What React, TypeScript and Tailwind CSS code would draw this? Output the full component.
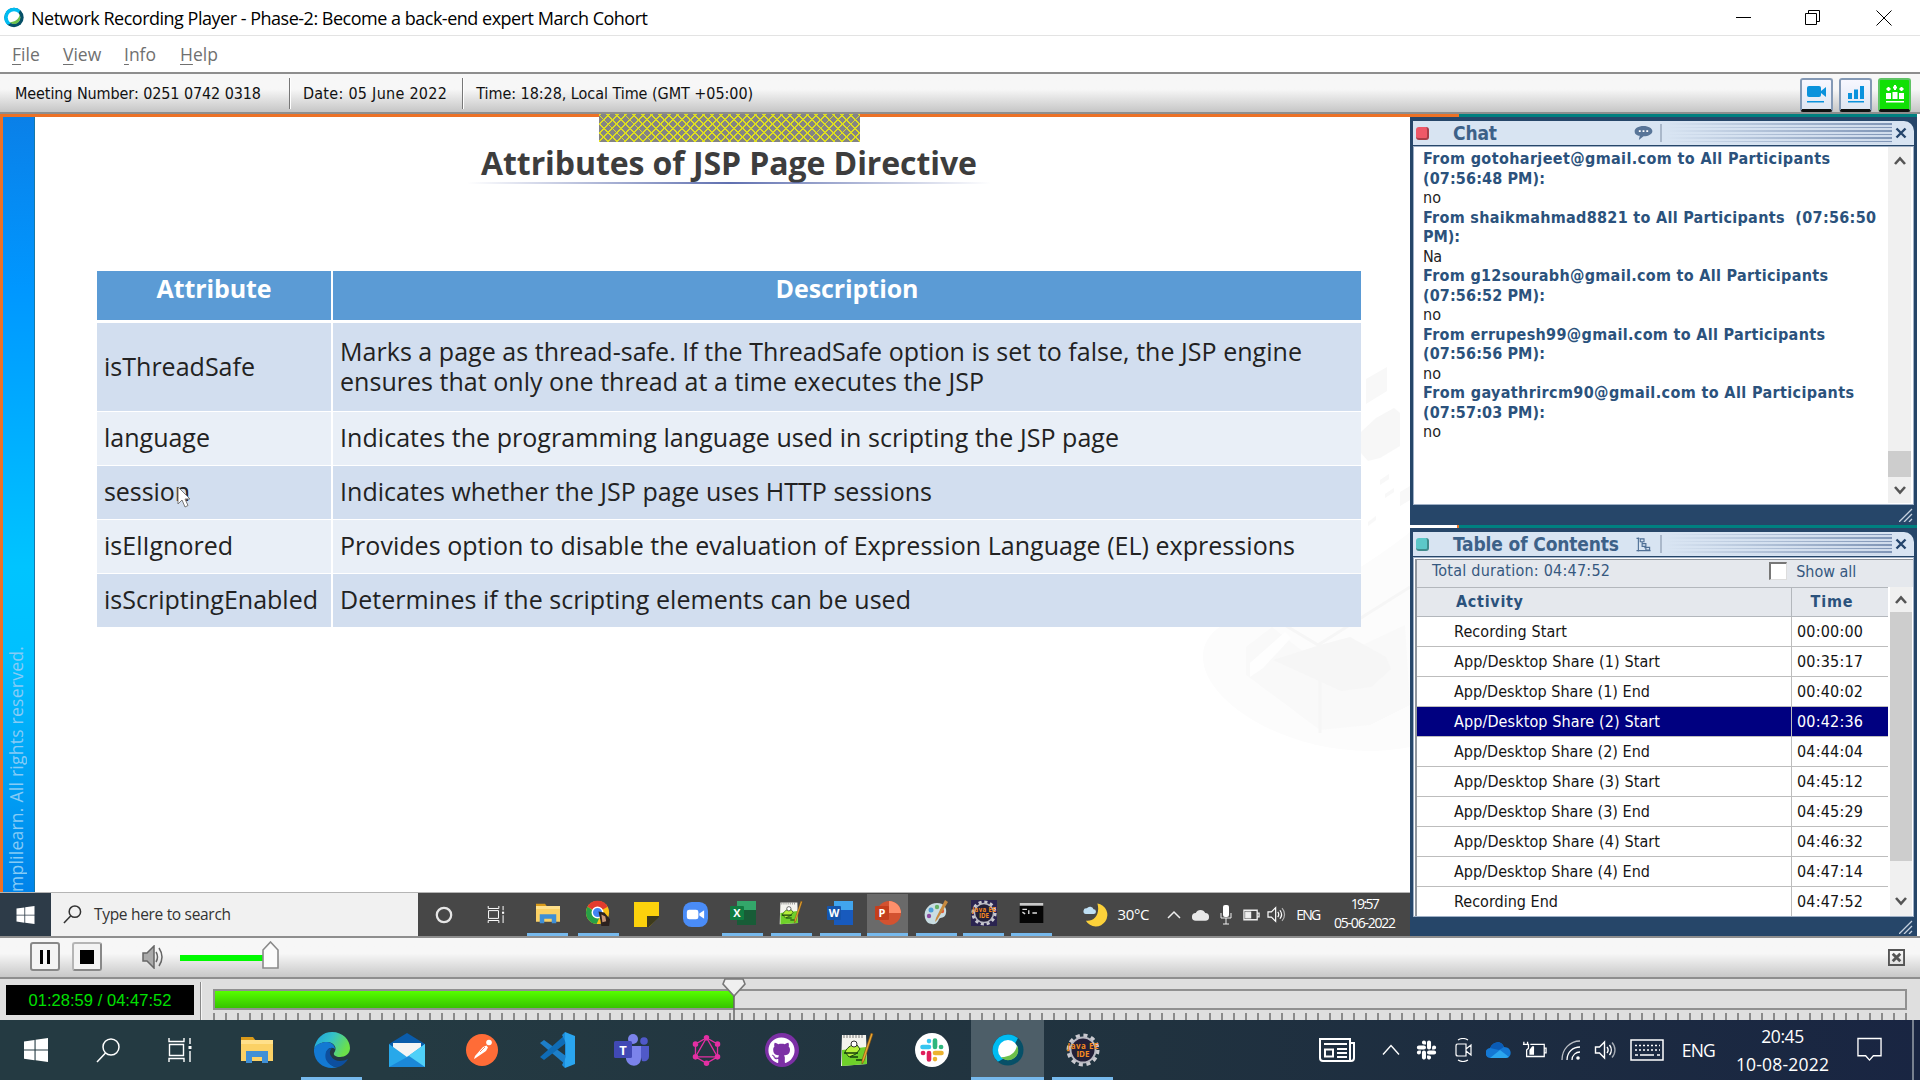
import React, { useLayoutEffect, useRef, useState } from "react";
import { FaGithub, FaSlack } from "react-icons/fa";
import { SiGraphql } from "react-icons/si";

/* Single line of text whose tracking is adjusted so that it spans exactly `w` pixels. */
function Fit({ w, children, className = "" }: { w: number; children: string; className?: string }) {
  const ref = useRef<HTMLSpanElement>(null);
  const [ls, setLs] = useState(0);
  useLayoutEffect(() => {
    const el = ref.current;
    if (!el) return;
    const natural = el.getBoundingClientRect().width;
    setLs((w - natural) / Math.max(1, children.length - 1));
  }, []);
  return (
    <span ref={ref} className={"inline-block shrink-0 whitespace-pre " + className} style={{ letterSpacing: ls + "px" }}>
      {children}
    </span>
  );
}

const segoe = "font-['Open_Sans','Noto_Sans',sans-serif]";
const tahoma = "font-['DejaVu_Sans_Condensed','DejaVu_Sans',sans-serif] [font-stretch:condensed]";

function WebexLogo({ className = "" }: { className?: string }) {
  return (
    <svg viewBox="0 0 32 32" className={className}>
      <ellipse cx="16" cy="16" rx="15.500" ry="15.500" fill="#075068" />
      <path d="M16 .5A15.500 15.500 0 0 0 6 27.800L16 22l10-17.700A15 15 0 0 0 16 .5z" fill="#00bcf2" />
      <path d="M26 4.300A15.500 15.500 0 0 1 6 27.800L20 24z" fill="#075068" />
      <circle cx="16" cy="16" r="10" fill="#fff" />
      <path d="M25 11.500A10 10 0 0 1 9 23.200C18 23 23.500 19 25 11.500z" fill="#6cc04a" />
    </svg>
  );
}

function WindowsLogo({ className = "" }: { className?: string }) {
  return (
    <svg viewBox="0 0 24 24" className={className} fill="#fff">
      <path d="M0 3.400 10.500 2v9.600H0zM11.600 1.800 24 0v11.600H11.600zM0 12.600h10.500v9.600L0 20.700zM11.600 12.600H24V24l-12.400-1.700z" />
    </svg>
  );
}

function TitleBar() {
  return (
    <div className={"flex h-9 items-center border-b border-[#e3e3e3] bg-white text-black " + segoe}>
      <WebexLogo className="ml-1 h-[21px] w-5" />
      <Fit w={617} className="ml-[7px] pt-px text-[18px]">Network Recording Player - Phase-2: Become a back-end expert March Cohort</Fit>
      <div className="ml-auto flex items-center pr-[28px]">
        <svg className="mr-[53px] h-4 w-4" viewBox="0 0 16 16" stroke="#000"><path d="M0 7.500h15" /></svg>
        <svg className="mr-[55px] h-4 w-4" viewBox="0 0 16 16" fill="none" stroke="#000"><path d="M.5 3.500h11v11H.5zM3.500 3V.5h11v11h-3" /></svg>
        <svg className="h-4 w-4" viewBox="0 0 16 16" stroke="#000"><path d="M.5.5l15 15M15.500.5l-15 15" /></svg>
      </div>
    </div>
  );
}

function MenuBar() {
  const items: [string, string, string][] = [
    ["F", "ile", "w-[51px]"],
    ["V", "iew", "w-[61px]"],
    ["I", "nfo", "w-[56px]"],
    ["H", "elp", "w-[60px]"],
  ];
  return (
    <div className={"flex h-9 items-center bg-white pl-3 text-[17.500px] text-[#707070] " + segoe}>
      {items.map(([a, b, w]) => (
        <span key={a} className={w}>
          <span className="underline underline-offset-[3px]">{a}</span>{b}
        </span>
      ))}
    </div>
  );
}

function InfoBar() {
  const button = "flex h-[34px] w-[33px] items-center justify-center rounded-[3px] border-2 border-b-[3px] border-b-[#111] ";
  const plain = button + "border-[#8499b5] bg-linear-to-b from-[#f7f7ff] to-[#dfe6f2]";
  return (
    <div className={"flex h-[42px] items-center border-y-2 border-[#8e8e8e] bg-linear-to-b from-[#f7f7f7] from-40% to-[#c6c6c6] text-[16px] text-[#111] " + tahoma}>
      <Fit w={246} className="ml-[15px] pt-[2px]">Meeting Number: 0251 0742 0318</Fit>
      <div className="ml-[28px] mt-px h-[31px] w-[2px] border-l border-[#777] bg-white" />
      <Fit w={144} className="ml-[12px] pt-[2px]">Date: 05 June 2022</Fit>
      <div className="ml-[15px] mt-px h-[31px] w-[2px] border-l border-[#777] bg-white" />
      <Fit w={277} className="ml-[12px] pt-[2px]">Time: 18:28, Local Time (GMT +05:00)</Fit>
      <div className="ml-auto mt-[3px] flex gap-[6px] pr-[9px]">
        <div className={plain}>
          <svg viewBox="0 0 22 20" className="h-5 w-[22px]" fill="#0a92dc"><rect x="1" y="2" width="14" height="11" rx="2" /><path d="M15 7l5-4v10l-5-4zM1 17h17v1.500H1z" /></svg>
        </div>
        <div className={plain}>
          <svg viewBox="0 0 22 20" className="h-5 w-[22px]" fill="#0a92dc"><path d="M3 9h4v6H3zM9 5.500h4V15H9zM15 2h4v13h-4zM3 17h16v1.500H3z" /></svg>
        </div>
        <div className={button + "border-[#5fc465] bg-[#10e005]"}>
          <svg viewBox="0 0 22 20" className="h-5 w-[22px]" fill="#fff"><path d="M2 9h5v6H2zM8.500 8h5v7h-5zM15 9h5v6h-5zM2 17h18v1.500H2zM3.500 3h2v4h-2zM2.500 4h4v2h-4zM10 1h2v5h-2zM9 2.500h4v2H9zM16.500 3h2v4h-2zM15.500 4h4v2h-4z" /></svg>
        </div>
      </div>
    </div>
  );
}

const attributes: [string, number, [string, number][]][] = [
  ["isThreadSafe", 151, [["Marks a page as thread-safe. If the ThreadSafe option is set to false, the JSP engine", 962], ["ensures that only one thread at a time executes the JSP", 644]]],
  ["language", 106, [["Indicates the programming language used in scripting the JSP page", 779]]],
  ["session", 86, [["Indicates whether the JSP page uses HTTP sessions", 592]]],
  ["isElIgnored", 129, [["Provides option to disable the evaluation of Expression Language (EL) expressions", 955]]],
  ["isScriptingEnabled", 214, [["Determines if the scripting elements can be used", 571]]],
];

function Slide() {
  return (
    <div className={"relative flex h-[778px] border-l-[3px] border-t-[3px] border-[#ec7126] bg-white " + segoe}>
      <svg className="absolute left-[1195px] top-[240px] h-[420px] w-[212px]" viewBox="0 0 212 420" fill="none">
        <path d="M5 300C5 270 40 255 90 250C150 220 180 200 212 175V390C110 410 5 350 5 300z" fill="#fcfcfc" />
        <path d="M168 22l21-12v24l-21 13z" fill="#f8f8f8" />
        <path d="M163 75l15-14 18-10 6 5v33l-20 12-12 3-7-8z" fill="#f7f7f7" />
        <path d="M182 123l9-6v5l-9 6zM187 137l9-6v4l-9 6zM170 165l8-6v4l-8 6zM202 135l10-6v14l-10 6z" fill="#f8f8f8" />
        <path d="M48 318V290l26-20 48 38 85-40 5 80-40 20-50 5z" fill="#f9f9f9" />
        <path d="M75 303l47-15 30-8 36 20 5 12-20 18-30 4z" fill="#f6f6f6" />
        <path d="M70 258l50 30 92-58M122 292v84" stroke="#f6f6f6" strokeWidth="3" />
        <path d="M52 320v-14l35-31 6 6-28 30z" fill="#fefefe" />
      </svg>
      <div className="flex w-8 shrink-0 items-end border-r border-[#1677a8] bg-[linear-gradient(180deg,#0a80e8,#0097ff_22%,#00c4ff_58%,#00c0ff_70%,#0083ea)]">
        <span className="h-[252px] rotate-180 overflow-hidden pr-[2px] text-[17.500px] leading-[22px] tracking-[0.250px] whitespace-nowrap text-[#86cbf6] [writing-mode:vertical-rl]">mplilearn. All rights reserved.</span>
      </div>
      <div className="absolute left-[596px] top-[-3px] h-[28px] w-[261px] bg-[#848484] bg-[repeating-linear-gradient(45deg,#dede20_0_1.4px,transparent_1.4px_6.130px),repeating-linear-gradient(-45deg,#dede20_0_1.4px,transparent_1.4px_6.130px)]" />
      <div className="relative flex flex-col pl-[62px]">
        <div className="ml-[370px] mt-[23px] h-[47px] w-[524px] pl-[14px] text-[32px] leading-[46px] font-bold text-[#3d3d3d]">
          <Fit w={496}>Attributes of JSP Page Directive</Fit>
        </div>
        <div className="ml-[370px] mt-[-5px] h-[2px] w-[524px] bg-linear-to-r from-transparent via-[#6070b0] to-transparent" />
        <div className="mt-[87px] w-[1264px]">
          <div className="grid grid-cols-[234px_1fr] gap-x-[2px] text-center text-[25px] leading-[34px] font-bold text-white">
            <div className="h-[49px] bg-[#5b9bd5]"><Fit w={115}>Attribute</Fit></div>
            <div className="h-[49px] bg-[#5b9bd5]"><Fit w={143}>Description</Fit></div>
          </div>
          <div className="mt-[3px] flex flex-col gap-px text-[25px] leading-[30px] text-[#222]">
            {attributes.map(([name, nw, lines], i) => (
              <div key={name} className={(i === 0 ? "h-[88px] " : "h-[53px] ") + "grid grid-cols-[234px_1fr] gap-x-[2px]"}>
                <div className={(i % 2 ? "bg-[#e9eff7]" : "bg-[#d2deef]") + " flex items-center pb-[3px] pl-[7px]"}><Fit w={nw}>{name}</Fit></div>
                <div className={(i % 2 ? "bg-[#e9eff7]" : "bg-[#d2deef]") + " flex flex-col items-start justify-center pb-[3px] pl-[7px]"}>
                  {lines.map(([t, w]) => <Fit key={t} w={w}>{t}</Fit>)}
                </div>
              </div>
            ))}
          </div>
        </div>
      </div>
      <svg className="absolute left-[173px] top-[369px] h-[24px] w-[16px]" viewBox="0 0 16 24"><path d="M2 1v17l4-4 3 7 3-1.500-3-6.500h5z" fill="#fff" stroke="#777" /></svg>
    </div>
  );
}

function Folder({ className }: { className: string }) {
  return (
    <svg viewBox="0 0 32 28" className={className}>
      <path d="M0 1h12l3 4H0z" fill="#d99a1a" /><path d="M0 4h32v21H0z" fill="#fbd165" /><path d="M0 4h32v4H0z" fill="#ffe08a" />
      <path d="M5 27V15h22v12h-6v-6H11v6z" fill="#3f8fd6" />
    </svg>
  );
}

function OfficeIcon({ letter, className }: { letter: string; className: string }) {
  const c: Record<string, [string, string, string]> = { X: ["#33a76a", "#185c37", "#107c41"], W: ["#41a5ee", "#185abd", "#1555ac"], P: ["#ff8f6b", "#d35230", "#c43e1c"] };
  const [a, b, d] = c[letter];
  return (
    <svg viewBox="0 0 26 26" className={className}>
      {letter === "P" ? <><circle cx="14" cy="13" r="12" fill={b} /><path d="M14 1a12 12 0 0 1 12 12H14z" fill={a} /></> : <><path d="M7 1h19v12H7z" fill={a} /><path d="M7 10h19v15H7z" fill={b} /></>}
      <rect x="0" y="6" width="14" height="14" rx="1" fill={d} />
      <text x="7" y="17" fontSize="11" fontWeight="700" textAnchor="middle" fill="#fff" fontFamily="Open Sans">{letter}</text>
    </svg>
  );
}

function NotepadIcon({ className }: { className: string }) {
  return (
    <svg viewBox="0 0 34 34" className={className}>
      <path d="M2 2h24l1 29-26 2z" fill="#f4f4ee" /><path d="M4 2v3M7 2v3M10 2v3M13 2v3M16 2v3M19 2v3M22 2v3" stroke="#777" />
      <path d="M2 17l24-3 1 17-25 2z" fill="#6fd02a" /><path d="M5 19c3-6 8-8 12-7l3 4-4 5-7 3z" fill="#b6ef3b" stroke="#1e4a10" />
      <circle cx="14" cy="11" r="3" fill="#fff" stroke="#333" /><path d="M4 20h14M10 24h8M16 27h8" stroke="#153d0c" strokeWidth="1.600" />
      <path d="M33 1L24 28l-2 3v-4L31 0z" fill="#eaa630" stroke="#7a4a10" strokeWidth=".6" />
    </svg>
  );
}

function GearIde({ className }: { className: string }) {
  return (
    <svg viewBox="0 0 34 34" className={className}>
      <circle cx="17" cy="17" r="14.500" fill="none" stroke="#c9c9cf" strokeWidth="4" strokeDasharray="4 3.590" />
      <circle cx="17" cy="17" r="12.500" fill="#231f38" stroke="#b9b9c2" strokeWidth="2" />
      <text x="17" y="16" fontSize="8" fontWeight="700" textAnchor="middle" textLength="31" fill="#f58a1f" fontFamily="Open Sans">Java EE</text>
      <text x="17" y="24" fontSize="8" fontWeight="700" textAnchor="middle" fill="#f58a1f" fontFamily="Open Sans">IDE</text>
    </svg>
  );
}

function TaskView({ className }: { className: string }) {
  return (
    <svg viewBox="0 0 24 24" className={className} fill="none" stroke="#fff" strokeWidth="1.400">
      <path d="M1 0v3.500h15V0M1 24v-3.500h15V24M1.500 6.500h14v11h-14zM22 0v6M22 13v11" /><path d="M20.500 8h3v3h-3z" fill="#fff" stroke="none" />
    </svg>
  );
}

function SpeakerWaves({ className }: { className: string }) {
  return (
    <svg viewBox="0 0 22 20" className={className} fill="none" stroke="#fff" strokeWidth="1.400">
      <path d="M1 7h4l5-5v16l-5-5H1zM12.500 7a5 5 0 0 1 0 6" /><path d="M15 5a8 8 0 0 1 0 10" /><path d="M17.500 2.500a11 11 0 0 1 0 15" opacity=".6" />
    </svg>
  );
}

function SharedTaskbar() {
  const ul = "border-b-[3px] border-[#76b9ed]";
  const cell = "flex h-[42px] w-[41px] mr-[7.600px] shrink-0 items-center justify-center ";
  return (
    <div className={"flex h-[44px] items-center border-t border-[#b5b5b5] bg-[#474747] text-white [&>*]:shrink-0 " + segoe}>
      <div className="flex h-full w-[51px] items-center justify-center bg-[#2d3b48]"><WindowsLogo className="h-[18px] w-[19px]" /></div>
      <div className="flex h-full w-[367px] items-center bg-[#f1f1f1] pl-3 text-[#333]">
        <svg viewBox="0 0 20 20" className="h-[19px] w-[19px]" fill="none" stroke="#333" strokeWidth="1.600"><circle cx="12.500" cy="7" r="6" /><path d="M8 11.500L1 19" /></svg>
        <Fit w={137} className="ml-[12px] text-[15.500px]">Type here to search</Fit>
      </div>
      <div className="flex w-[52px] items-center justify-center"><svg viewBox="0 0 20 20" className="h-[18px] w-[18px]" fill="none" stroke="#e6e6e6" strokeWidth="2.500"><circle cx="10" cy="10" r="8" /></svg></div>
      <div className="flex w-[55px] items-center justify-center"><TaskView className="mr-[4px] h-[17px] w-[18px]" /></div>
      <div className={cell + ul + " ml-[2px]"}><Folder className="h-[23px] w-[24px]" /></div>
      <div className={cell + ul + " ml-[2px]"}>
        <svg viewBox="0 0 28 28" className="h-[27px] w-[27px]"><circle cx="13" cy="13" r="12" fill="#fbc116" /><path d="M13 13L2.600 7A12 12 0 0 1 23.500 7z" fill="#e33b2e" /><path d="M2.600 7A12 12 0 0 0 12 25l4-9z" fill="#28a046" /><circle cx="13" cy="13" r="5.500" fill="#4285f4" stroke="#fff" strokeWidth="1.500" /><path d="M14 12l6 1 6 7-1 7h-8l-1-6z" fill="#2a211f" /><path d="M17 15l4 2 1 5-4 1z" fill="#c89578" /></svg>
      </div>
      <div className={cell}><svg viewBox="0 0 25 25" className="h-[25px] w-[25px]"><path d="M0 0h25v14L15 25H0z" fill="#fcd20c" /><path d="M13 14h12v1L15 25h-2z" fill="#3d3a1c" /></svg></div>
      <div className={cell}><svg viewBox="0 0 26 26" className="h-[25px] w-[25px]"><rect width="26" height="26" rx="9" fill="#4a8cf7" /><rect x="4" y="8" width="12" height="10" rx="2.500" fill="#fff" /><path d="M17 12l5-3.500v9L17 14z" fill="#fff" /></svg></div>
      <div className={cell + ul + " -ml-[1px]"}><OfficeIcon letter="X" className="h-[26px] w-[26px]" /></div>
      <div className={cell + ul}><NotepadIcon className="h-[26px] w-[24px]" /></div>
      <div className={cell + ul}><OfficeIcon letter="W" className="h-[26px] w-[26px]" /></div>
      <div className={cell + ul + " -ml-[1px] bg-[#6a6a6a]"}><OfficeIcon letter="P" className="h-[26px] w-[26px]" /></div>
      <div className={cell + ul}><svg viewBox="0 0 26 26" className="h-[26px] w-[26px]"><path d="M2 18C0 9 7 3 14 3c7 0 10 5 9 10-1 6-6 4-7 6-1 3-3 6-7 5-4 0-6-3-7-6z" fill="#c9dde2" /><circle cx="8" cy="10" r="2.500" fill="#4e9fd8" /><circle cx="14" cy="7" r="2.200" fill="#66b266" /><circle cx="19" cy="11" r="2.200" fill="#e05a3a" /><circle cx="6" cy="16" r="2.200" fill="#8c4aa0" /><path d="M25 2L14 20l-2 2 1-4L22 0z" fill="#c88b3f" /></svg></div>
      <div className={cell + ul + " -ml-[1px]"}><div className="bg-[#2b2450]"><GearIde className="h-[26px] w-[26px]" /></div></div>
      <div className={cell + ul + " -ml-[1px]"}><svg viewBox="0 0 26 22" className="h-[20px] w-[25px]"><path d="M0 0h26v22H0z" fill="#050505" /><path d="M0 0h26v3H0z" fill="#c9c9c9" /><path d="M3 7h5M3 10l3 2M10 8v4M14 11h5" stroke="#ddd" strokeWidth="1.500" /></svg></div>
      <svg viewBox="0 0 26 26" className="ml-[23px] h-[26px] w-[25px]"><path d="M15 1a12 12 0 1 1-12 18C12 20 18 12 15 1z" fill="#fcd13a" /><path d="M3 12a3 3 0 0 1 1-6 4 4 0 0 1 7 1 2.500 2.500 0 0 1 0 5z" fill="#bfe0f5" /></svg>
      <Fit w={32} className="ml-[10px] text-[15px]">30°C</Fit>
      <svg viewBox="0 0 14 10" className="ml-[18px] h-[10px] w-[14px]" fill="none" stroke="#eee" strokeWidth="1.500"><path d="M1 8l6-6 6 6" /></svg>
      <svg viewBox="0 0 20 14" className="ml-[10px] h-[14px] w-[19px]" fill="#e8e8e8"><path d="M5 13a4 4 0 0 1 0-8 5.500 5.500 0 0 1 10 0 4 4 0 0 1 0 8z" /></svg>
      <svg viewBox="0 0 14 20" className="ml-[9px] h-[20px] w-[14px]"><rect x="4" y="0" width="6" height="12" rx="2" fill="#fff" /><path d="M2 8v5h10V8M7 13v6M4 19h6" stroke="#eee" fill="none" /></svg>
      <svg viewBox="0 0 18 12" className="ml-[10px] h-[12px] w-[17px]" fill="none" stroke="#eee" strokeWidth="1.400"><path d="M1 1h14v10H1zM15 4h2v4h-2" /><path d="M3 3h5v6H3z" fill="#eee" /></svg>
      <SpeakerWaves className="ml-[7px] h-[17px] w-[19px]" />
      <Fit w={25} className="ml-[10px] text-[14px]">ENG</Fit>
      <div className="ml-[14px] flex w-[62px] flex-col items-center pb-[3px] text-[14px] leading-[19px]"><Fit w={29}>19:57</Fit><Fit w={62}>05-06-2022</Fit></div>
    </div>
  );
}

function PanelHeader({ title, w, dot, icon, iconGap }: { title: string; w: number; dot: string; icon: React.ReactNode; iconGap: string }) {
  return (
    <div className={"flex h-[24px] shrink-0 items-center rounded-tr-[10px] bg-[#d8e4f2] " + tahoma}>
      <div className={"ml-[3px] h-[13px] w-[13px] rounded-[3px] border-b-2 border-r-2 border-black/30 " + dot} />
      <Fit w={w} className="ml-[24px] text-[19px] leading-6 font-bold text-[#3d6188]">{title}</Fit>
      <div className={iconGap}>{icon}</div>
      <div className="ml-auto h-[18px] w-[2px] bg-[#aab8ca]" />
      <div className="ml-1 h-[21px] w-[226px] bg-[linear-gradient(90deg,#d8e4f2,transparent),repeating-linear-gradient(180deg,#7f95b6_0_1.500px,#d0dcec_1.500px_3.500px)]" />
      <svg viewBox="0 0 12 12" className="ml-[3px] mr-[7px] h-[12px] w-[12px]" stroke="#24456c" strokeWidth="2.400"><path d="M1.500 1.500l9 9M10.500 1.500l-9 9" /></svg>
    </div>
  );
}

function Grip() {
  return (
    <div className="flex h-5 shrink-0 items-center justify-end bg-[#264669] pr-[1px]">
      <svg viewBox="0 0 14 14" className="h-[14px] w-[14px]" stroke="#c5d0de" strokeWidth="1.300"><path d="M0 14L13 1M5 14l8-8M10 14l3-3" /></svg>
    </div>
  );
}

const Chevron = ({ up }: { up?: boolean }) => (
  <svg viewBox="0 0 12 10" className="h-[10px] w-[12px]" fill="none" stroke="#555" strokeWidth="2.600">
    <path d={up ? "M1 8l5-5.500L11 8" : "M1 2l5 5.500L11 2"} />
  </svg>
);

const chat: [string, number, boolean][] = [
  ["From gotoharjeet@gmail.com to All Participants", 407, true],
  ["(07:56:48 PM):", 122, true],
  ["no", 18, false],
  ["From shaikmahmad8821 to All Participants  (07:56:50", 453, true],
  ["PM):", 37, true],
  ["Na", 19, false],
  ["From g12sourabh@gmail.com to All Participants", 405, true],
  ["(07:56:52 PM):", 122, true],
  ["no", 18, false],
  ["From errupesh99@gmail.com to All Participants", 402, true],
  ["(07:56:56 PM):", 122, true],
  ["no", 18, false],
  ["From gayathrircm90@gmail.com to All Participants", 431, true],
  ["(07:57:03 PM):", 122, true],
  ["no", 18, false],
];

function ChatPanel() {
  return (
    <div className="flex h-[408px] flex-col bg-[#264669] px-[3px] pt-[4px]">
      <PanelHeader title="Chat" w={44} dot="bg-[#ee5868]" iconGap="ml-[137px]" icon={
        <svg viewBox="0 0 20 15" className="h-[14px] w-[19px]"><path d="M10 0c5.500 0 9.500 2.500 9.500 5.500S15.500 11 10 11l-5 4 1-4.500C2 10 .5 8 .5 5.500.5 2.500 4.500 0 10 0z" fill="#587598" /><path d="M5 5.500h2M9 5.500h2M13 5.500h2" stroke="#fff" strokeWidth="2" /></svg>
      } />
      <div className="mt-px flex flex-1 border border-[#9fb0c6] bg-white">
        <div className={"flex flex-1 flex-col items-start pl-[9px] pt-[2px] text-[16px] leading-[19.530px] " + tahoma}>
          {chat.map(([t, w, b], i) => (
            <Fit key={i} w={w} className={b ? "font-bold text-[#2b527c]" : "text-[#222]"}>{t}</Fit>
          ))}
        </div>
        <div className="mr-[2px] flex h-[356px] w-[23px] flex-col items-center bg-[#f0f0f0] pt-[9px]">
          <Chevron up />
          <div className="mt-[285px] mb-[8px] h-[26px] w-full bg-[#cdcdcd]" />
          <Chevron />
        </div>
      </div>
      <Grip />
    </div>
  );
}

const toc: [string, number, string][] = [
  ["Recording Start", 113, "00:00:00"],
  ["App/Desktop Share (1) Start", 206, "00:35:17"],
  ["App/Desktop Share (1) End", 196, "00:40:02"],
  ["App/Desktop Share (2) Start", 206, "00:42:36"],
  ["App/Desktop Share (2) End", 196, "04:44:04"],
  ["App/Desktop Share (3) Start", 206, "04:45:12"],
  ["App/Desktop Share (3) End", 196, "04:45:29"],
  ["App/Desktop Share (4) Start", 206, "04:46:32"],
  ["App/Desktop Share (4) End", 196, "04:47:14"],
  ["Recording End", 104, "04:47:52"],
];

function TocPanel() {
  return (
    <div className="flex h-[408px] flex-col bg-[#264669] px-[3px] pt-[4px]">
      <PanelHeader title="Table of Contents" w={166} dot="bg-[#5cc8c8]" iconGap="ml-[17px]" icon={
        <svg viewBox="0 0 16 16" className="h-[15px] w-[16px]" fill="none" stroke="#4f6f95" strokeWidth="1.200"><path d="M2 .5v15M0 1.500h3M0 14.500h15M4 2h4v3H4zM6 5v3M6 7h4v3H6zM9 10v2M10 11h4v3h-4z" /></svg>
      } />
      <div className={"mt-px flex flex-1 flex-col border border-b-[1px] border-[#9fb0c6] bg-white pl-[1px] pt-[1px] " + tahoma}>
        <div className="flex flex-1 flex-col border-l-2 border-t border-[#8f959c] bg-[#e5e8ed] text-[16px] leading-5">
          <div className="flex h-[27px] items-center pl-[15px] text-[#36587f]">
            <Fit w={178} className="mt-[-5px]">Total duration: 04:47:52</Fit>
            <div className="ml-[159px] mt-[-6px] h-[18px] w-[18px] border-2 border-r border-b border-[#777] border-r-[#ddd] border-b-[#ddd] bg-white" />
            <Fit w={60} className="ml-[9px] mt-[-3px]">Show all</Fit>
          </div>
          <div className="flex flex-1 bg-white">
            <div className="flex w-[471px] flex-col">
              <div className="grid h-[30px] grid-cols-[375px_1fr] items-stretch border-y border-[#b3b7bc] bg-[#e5e8ed] font-bold text-[#2b527c]">
                <div className="flex items-center border-r border-[#b3b7bc] pl-[39px]"><Fit w={67}>Activity</Fit></div>
                <div className="flex items-center justify-center pr-[16px]"><Fit w={42}>Time</Fit></div>
              </div>
              {toc.map(([n, w, t], i) => (
                <div key={n} className={"grid grid-cols-[375px_1fr] " + (i === 9 ? "h-[29px] " : "h-[30px] border-b border-[#bdbdbd] ") + (i === 3 ? "bg-[#000080] text-white" : "bg-white text-[#151515]")}>
                  <div className="flex items-center border-r border-[#bdbdbd] pl-[37px]"><Fit w={w}>{n}</Fit></div>
                  <div className="flex items-center pl-[5px]"><Fit w={66}>{t}</Fit></div>
                </div>
              ))}
            </div>
            <div className="ml-[2px] flex w-[22px] flex-col items-center bg-[#f0f0f0] pt-[8px]">
              <Chevron up />
              <div className="mt-[7px] mb-[35px] h-[249px] w-full bg-[#cdcdcd]" />
              <Chevron />
            </div>
          </div>
        </div>
      </div>
      <Grip />
    </div>
  );
}

function Controls() {
  return (
    <div className="flex h-[43px] items-center border-y-2 border-[#8e8e8e] bg-linear-to-b from-[#f7f7f7] from-40% to-[#c8c8c8] pb-[2px]">
      <div className="ml-[30px] flex h-[29px] w-[30px] items-center justify-center gap-[4px] rounded-[3px] border-2 border-[#888] bg-[#f4f4f4]"><div className="h-[14px] w-[3px] bg-black" /><div className="h-[14px] w-[3px] bg-black" /></div>
      <div className="ml-[12px] flex h-[29px] w-[30px] items-center justify-center rounded-[3px] border-2 border-[#b5b5b5] border-b-[#888] border-r-[#888] bg-[#f4f4f4]"><div className="h-[14px] w-[14px] bg-black" /></div>
      <svg viewBox="0 0 22 24" className="ml-[40px] h-[24px] w-[22px]" fill="none" stroke="#666" strokeWidth="1.500"><path d="M1 8h4l7-7v22l-7-7H1z" fill="#aaa" /><path d="M14 7q3 5 0 10M17 3q6 9 0 18" /></svg>
      <div className="ml-[16px] mt-[2px] h-[6px] w-[83px] bg-[#00fa00]" />
      <svg viewBox="0 0 17 28" className="ml-[-1px] mt-[-3px] h-[28px] w-[17px]"><path d="M1 9l7.500-8L16 9v18H1z" fill="#fbfbfb" stroke="#8a8a8a" strokeWidth="1.600" /></svg>
      <svg viewBox="0 0 18 18" className="ml-auto mr-[15px] mt-px h-[17px] w-[17px]" fill="none" stroke="#555"><path d="M1 1h16v16H1z" strokeWidth="2" /><path d="M5 5l8 8M13 5l-8 8" strokeWidth="3" /></svg>
    </div>
  );
}

function Timeline() {
  return (
    <div className={"flex h-[41px] bg-[#dfdfdf] " + segoe}>
      <div className="ml-[6px] mt-[6px] flex h-[30px] w-[188px] items-center justify-center bg-black text-[#00e000] font-['Liberation_Sans',sans-serif] text-[16.500px]"><Fit w={143}>01:28:59 / 04:47:52</Fit></div>
      <div className="ml-[6px] mt-[3px] w-[2px] border-l border-[#888] bg-[#f5f5f5]" />
      <div className="relative ml-[11px] mt-[10px] w-[1694px]">
        <div className="h-[21px] border-2 border-[#909090]"><div className="h-full w-[519px] bg-linear-to-b from-[#56ff00] to-[#36c400]" /></div>
        <div className="mt-[3px] h-[7px] bg-[repeating-linear-gradient(90deg,#8a8a8a_0_2px,transparent_2px_12px)]" />
        <svg viewBox="0 0 24 42" className="absolute left-[509px] top-[-11px] h-[42px] w-[24px]"><path d="M3 1h18l2 5-11 12L1 6z" fill="#f0f0f0" stroke="#777" strokeWidth="1.600" /><path d="M12 18v24" stroke="#666" strokeWidth="1.500" /></svg>
      </div>
    </div>
  );
}

function Taskbar() {
  const cell = "flex h-full w-[75px] items-center justify-center";
  const ul = "w-[61px] mx-[7px] border-b-[3px] border-[#76b9ed] pt-[3px]";
  return (
    <div className={"flex h-[60px] items-center bg-linear-to-r from-[#243a42] from-20% via-[#20323f] via-60% to-[#192542] text-white [&>*]:shrink-0 " + segoe}>
      <div className="flex w-[72px] justify-center"><WindowsLogo className="h-6 w-6" /></div>
      <div className="flex w-[72px] justify-center"><svg viewBox="0 0 24 25" className="h-[25px] w-6" fill="none" stroke="#fff" strokeWidth="1.500"><circle cx="15" cy="9" r="8" /><path d="M9.500 15L1 24" /></svg></div>
      <div className="mr-[3px] flex w-[72px] justify-center"><TaskView className="h-6 w-6" /></div>
      <div className={cell}><Folder className="h-7 w-8" /></div>
      <div className={"flex h-full items-center justify-center " + ul}>
        <svg viewBox="0 0 36 36" className="h-9 w-9">
          <defs><linearGradient id="eg" x1="0" y1="0" x2="1" y2=".4"><stop offset="0" stopColor="#1ba0e0" /><stop offset=".5" stopColor="#35c1c8" /><stop offset="1" stopColor="#6be04a" /></linearGradient></defs>
          <path d="M0 17C2 6 9 0 18 0c11 0 18 8 18 16 0 6-5 9-10 9-4 0-7-2-6-4 4-5 0-11-7-11C7 10 2 13 0 17z" fill="url(#eg)" />
          <path d="M0 17c2-5 8-7 13-7 5 0 8 4 8 7-4-3-9 0-9 6 0 7 7 13 12 12C11 39-1 30 0 17z" fill="#1379d2" />
          <path d="M12 20c-3 9 5 15 12 15 5-1 8-5 10-8-6 3-14 3-17-3-2-3-1-6 1-8-3 0-5 2-6 4z" fill="#0d4f9e" />
        </svg>
      </div>
      <div className={cell}><svg viewBox="0 0 36 34" className="h-[34px] w-9"><path d="M0 11L18 0l18 11v10H0z" fill="#0a5cab" /><path d="M4 10h28v14H4z" fill="#f4f4f4" /><path d="M0 11l18 13L36 11v23H0z" fill="#28a8ea" /><path d="M18 24L36 11v23H28z" fill="#4fd0f8" /><path d="M0 34l20-11 16 11z" fill="#1b88d8" /></svg></div>
      <div className={cell}><svg viewBox="0 0 32 32" className="h-8 w-8"><circle cx="16" cy="16" r="16" fill="#ff6c37" /><path d="M9 24.500L8 25l1-3 8-9 3.500-1.500 1.500 2-2 3.500z" fill="#fff" /><circle cx="23" cy="8.500" r="2.800" fill="#fff" /><path d="M14 18l5-5" stroke="#ff6c37" strokeWidth=".8" /></svg></div>
      <div className={cell}><svg viewBox="0 0 36 36" className="h-9 w-9"><path d="M1 11l4-3 22 16v9z" fill="#1d7fc9" /><path d="M1 25l4 3L27 11V2z" fill="#0f6cb6" /><path d="M26 0l10 4v28l-10 4z" fill="#2aa5ef" /><path d="M26 0l-3 3 4 8v14l-4 8 3 3z" fill="#1c8ddb" /></svg></div>
      <div className={cell}><svg viewBox="0 0 36 32" className="h-8 w-9"><circle cx="19" cy="5" r="5" fill="#7b83eb" /><circle cx="30" cy="7" r="3.800" fill="#5059c9" /><path d="M24 12h11v10c0 4-3 6-7 5z" fill="#5059c9" /><path d="M12 12h15v12c0 10-13 10-15 1z" fill="#7b83eb" /><rect y="7" width="18" height="17" rx="1.500" fill="#4149b5" /><text x="9" y="20.500" textAnchor="middle" fontSize="13" fontWeight="700" fill="#fff" fontFamily="Open Sans">T</text></svg></div>
      <div className={cell}><SiGraphql className="h-[31px] w-[31px] text-[#e32fa3]" /></div>
      <div className={cell}><div className="flex h-[34px] w-[34px] items-center justify-center rounded-full bg-[#7c30a5]"><FaGithub className="h-[27px] w-[27px]" /></div></div>
      <div className={cell}><NotepadIcon className="h-[34px] w-[34px]" /></div>
      <div className={cell}>
        <svg viewBox="0 0 34 34" className="h-[34px] w-[34px]" strokeWidth="4.600" strokeLinecap="round"><circle cx="17" cy="17" r="17" fill="#fff" />
          <path d="M14 14H7.500M14 8v.1" stroke="#36c5f0" /><path d="M20 14V7.500M26 14h.1" stroke="#2eb67d" /><path d="M20 20h6.500M20 26v.1" stroke="#ecb22e" /><path d="M14 20v6.500M8 20h.1" stroke="#e01e5a" />
        </svg>
      </div>
      <div className="ml-[2px] flex h-full w-[73px] items-center justify-center border-b-[3px] border-[#76b9ed] bg-[#4d5e68] pt-[3px]"><WebexLogo className="h-8 w-8" /></div>
      <div className="ml-[8px] flex h-full w-[61px] items-center justify-center border-b-[3px] border-[#76b9ed] pt-[3px]"><GearIde className="h-[34px] w-[34px]" /></div>

      <div className="ml-auto flex h-full items-center">
        <svg viewBox="0 0 36 24" className="h-6 w-9" fill="none" stroke="#fff" strokeWidth="2"><path d="M1 1h30v22H4c-2 0-3-1-3-3zM31 5h4v15c0 2-1 3-3 3h-3" /><path d="M5 6h23M18 11h10M18 15h10M18 19h10" /><path d="M6 11.500h8v7H6z" /></svg>
        <svg viewBox="0 0 18 12" className="ml-[27px] h-3 w-[18px]" fill="none" stroke="#fff" strokeWidth="1.400"><path d="M1 10.500l8-9 8 9" /></svg>
        <FaSlack className="ml-[16px] h-[22px] w-[21px]" />
        <svg viewBox="0 0 18 24" className="ml-[18px] h-6 w-[18px]" fill="none" stroke="#fff" strokeWidth="1.200"><path d="M3 6h8v12H3c-2 0-2-1-2-2V8c0-2 1-2 2-2zM11 11l5-4v10l-5-4M3 2q5-3 10 0M3 22q5 3 10 0" /></svg>
        <svg viewBox="0 0 25 18" className="ml-[13px] h-[18px] w-[25px]"><path d="M5 17a5 5 0 0 1-1-10C7 0 16-1 18 6c8 0 9 10 2 11z" fill="#1478d4" /><path d="M4 17L14 9l9 7-3 1z" fill="#2ba6ef" /><path d="M4 7C7 0 15-1 18 6l-5 3z" fill="#0a5bb5" /></svg>
        <svg viewBox="0 0 27 18" className="ml-[11px] h-[18px] w-[25px]" fill="none" stroke="#fff" strokeWidth="1.400"><path d="M9 3h15v13H5v-6M24 7h2v5h-2M2 0v3M6 0v3M1 3h6v4l-2 2v2" /><path d="M8 14V9l3-4h2v9z" fill="#fff" stroke="none" /></svg>
        <svg viewBox="0 0 20 20" className="ml-[14px] h-5 w-5" fill="none" stroke="#fff" strokeWidth="1.300"><path d="M1 20C1 9 9 1 19 1" opacity=".7" /><path d="M6 20c0-8 6-13 13-13M11 20c0-5 4-8 8-8" /><circle cx="17" cy="18" r="1.800" fill="#fff" stroke="none" /></svg>
        <SpeakerWaves className="ml-[13px] h-5 w-[23px]" />
        <svg viewBox="0 0 34 22" className="ml-[13px] h-[22px] w-[34px]" fill="none" stroke="#fff" strokeWidth="1.500"><path d="M1 1h32v20H1z" /><path d="M5 6.500h25M5 11h25" strokeDasharray="2 2" /><path d="M5 16h3M10 16h14M27 16h3" /></svg>
        <Fit w={34} className="ml-[18px] text-[17.500px]">ENG</Fit>
        <div className="ml-[21px] flex w-[93px] flex-col items-center text-[17.500px] leading-[28px]"><Fit w={43}>20:45</Fit><Fit w={93}>10-08-2022</Fit></div>
        <svg viewBox="0 0 26 26" className="ml-[28px] h-[26px] w-[25px]" fill="none" stroke="#fff" strokeWidth="1.400"><path d="M1 1h24v18h-8l-4 4.500L9 19H1z" /></svg>
        <div className="ml-[30px] mr-[6px] h-full w-[2px] bg-[#77808f]" />
      </div>
    </div>
  );
}

export default function App() {
  return (
    <div className="flex h-[1080px] w-[1920px] flex-col overflow-hidden bg-white">
      <TitleBar />
      <MenuBar />
      <InfoBar />
      <div className="flex h-[822px]">
        <div className="flex w-[1410px] shrink-0 flex-col">
          <Slide />
          <SharedTaskbar />
        </div>
        <div className="flex w-[507px] flex-col">
          <div className="flex h-[3px]"><div className="w-[49px] bg-[#ec7126]" /><div className="flex-1 bg-[#008080]" /></div>
          <ChatPanel />
          <div className="flex h-[3px]"><div className="w-[47px] bg-white" /><div className="w-[2px] bg-[#ec7126]" /><div className="flex-1 bg-[#008080]" /></div>
          <TocPanel />
        </div>
      </div>
      <Controls />
      <Timeline />
      <Taskbar />
    </div>
  );
}
